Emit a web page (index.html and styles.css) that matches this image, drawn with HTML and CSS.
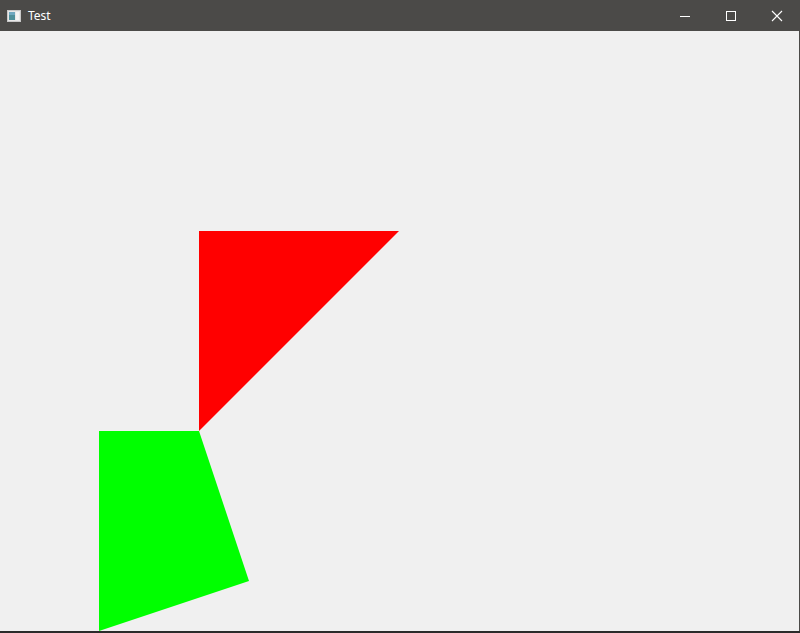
FILE: index.html
```html
<!DOCTYPE html>
<html>
<head>
<meta charset="utf-8">
<title>Test</title>
<link rel="stylesheet" href="styles.css">
</head>
<body>
<div class="window">
  <div class="titlebar">
    <div class="title">
      <svg class="app-icon" width="14" height="12" viewBox="0 0 14 12">
        <rect x="0.5" y="0.5" width="13" height="11" fill="#e8e8e8" stroke="#c8c8c8"/>
        <rect x="2" y="2" width="6" height="8" fill="#4f8f9a"/>
        <rect x="2" y="2" width="6" height="3" fill="#6fa8c0"/>
        <rect x="9" y="2" width="3" height="8" fill="#f4f4f4"/>
      </svg>
      <span class="title-text">Test</span>
    </div>
    <div class="controls">
      <div class="ctl">
        <svg width="12" height="12" viewBox="0 0 12 12"><line x1="1" y1="6.5" x2="11" y2="6.5" stroke="#fff" stroke-width="1"/></svg>
      </div>
      <div class="ctl">
        <svg width="12" height="12" viewBox="0 0 12 12"><rect x="1.5" y="1.5" width="9" height="9" fill="none" stroke="#fff" stroke-width="1"/></svg>
      </div>
      <div class="ctl">
        <svg width="12" height="12" viewBox="0 0 12 12"><path d="M1 1 L11 11 M11 1 L1 11" stroke="#fff" stroke-width="1.1"/></svg>
      </div>
    </div>
  </div>
  <div class="client">
    <svg class="canvas" width="799" height="600" viewBox="0 0 799 600">
      <polygon points="199,200 399,200 199,400" fill="#ff0000"/>
      <polygon points="99,400 199,400 249,550 99,600" fill="#00ff00"/>
    </svg>
  </div>
  <div class="taskstrip"></div>
</div>
</body>
</html>
```
FILE: styles.css
```css
html, body {
  margin: 0;
  padding: 0;
  background: #4b4a48;
}
.window {
  width: 800px;
  height: 633px;
  display: flex;
  flex-direction: column;
  background: #4b4a48;
  overflow: hidden;
}
.titlebar {
  height: 31px;
  flex: none;
  display: flex;
  align-items: center;
  justify-content: space-between;
  background: #4b4a48;
  color: #fff;
}
.title {
  display: flex;
  align-items: center;
  padding-left: 7px;
  gap: 7px;
}
.app-icon {
  display: block;
}
.title-text {
  font-family: "Noto Sans", "Open Sans", sans-serif;
  font-size: 12px;
  line-height: 16px;
  color: #ffffff;
}
.controls {
  display: flex;
  height: 31px;
}
.ctl {
  width: 46px;
  height: 31px;
  display: flex;
  align-items: center;
  justify-content: center;
}
.ctl svg {
  display: block;
}
.client {
  flex: none;
  width: 799px;
  height: 600px;
  background: #f0f0f0;
}
.canvas {
  display: block;
}
.taskstrip {
  flex: none;
  height: 2px;
  background: #2b2b2b;
}
```
